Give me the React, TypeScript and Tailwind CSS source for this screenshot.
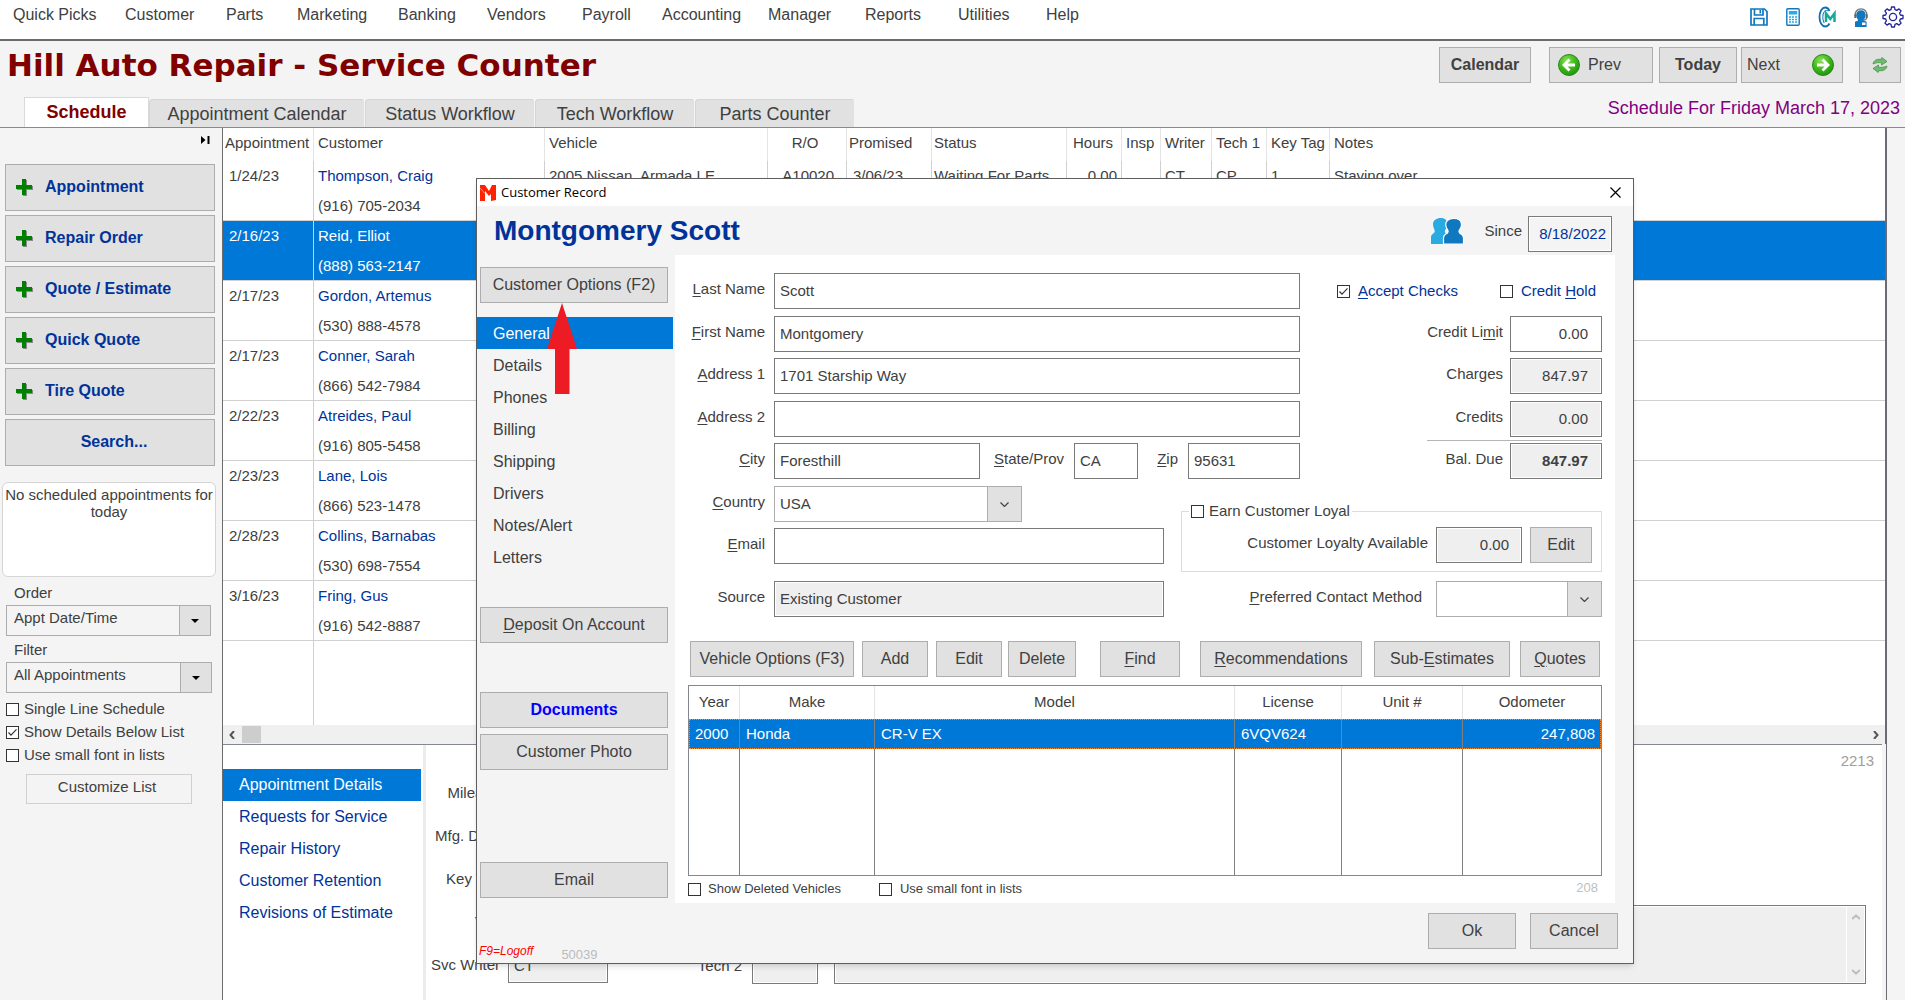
import React, { useState } from "react";
import type { ReactNode } from "react";

const MENU = [
  ["Quick Picks", "w-[112px]"],
  ["Customer", "w-[101px]"],
  ["Parts", "w-[71px]"],
  ["Marketing", "w-[101px]"],
  ["Banking", "w-[89px]"],
  ["Vendors", "w-[95px]"],
  ["Payroll", "w-20"],
  ["Accounting", "w-[106px]"],
  ["Manager", "w-[97px]"],
  ["Reports", "w-[93px]"],
  ["Utilities", "w-[88px]"],
  ["Help", "w-16"],
];

const TABS = [
  ["Appointment Calendar", "w-[216px]"],
  ["Status Workflow", "w-[170px]"],
  ["Tech Workflow", "w-40"],
  ["Parts Counter", "w-40"],
];

const COLUMNS = [
  ["Appointment", "w-[91px]", "text-left pl-0.5"],
  ["Customer", "w-[231px]", "text-left pl-1"],
  ["Vehicle", "w-[223px]", "text-left pl-1"],
  ["R/O", "w-[79px]", "text-center pr-1"],
  ["Promised", "w-[85px]", "text-left pl-0.5"],
  ["Status", "w-[135px]", "text-left pl-0.5"],
  ["Hours", "w-[55px]", "text-center pr-0.5"],
  ["Insp", "w-[39px]", "text-left pl-1"],
  ["Writer", "w-[51px]", "text-left pl-1"],
  ["Tech 1", "w-[55px]", "text-left pl-1"],
  ["Key Tag", "w-[63px]", "text-left pl-1"],
  ["Notes", "", "text-left pl-1"],
];

type Row = { date: string; name: string; phone: string; rest?: string[] };

const ROWS: Row[] = [
  {
    date: "1/24/23",
    name: "Thompson, Craig",
    phone: "(916) 705-2034",
    rest: ["2005 Nissan, Armada LE", "A10020", "3/06/23", "Waiting For Parts", "0.00", "", "CT", "CP", "1", "Staying over"],
  },
  { date: "2/16/23", name: "Reid, Elliot", phone: "(888) 563-2147" },
  { date: "2/17/23", name: "Gordon, Artemus", phone: "(530) 888-4578" },
  { date: "2/17/23", name: "Conner, Sarah", phone: "(866) 542-7984" },
  { date: "2/22/23", name: "Atreides, Paul", phone: "(916) 805-5458" },
  { date: "2/23/23", name: "Lane, Lois", phone: "(866) 523-1478" },
  { date: "2/28/23", name: "Collins, Barnabas", phone: "(530) 698-7554" },
  { date: "3/16/23", name: "Fring, Gus", phone: "(916) 542-8887" },
];

const REST_ALIGN = [
  "pl-1",
  "pr-3 text-right",
  "pl-1.5",
  "pl-0.5",
  "pr-1 text-right",
  "pl-1",
  "pl-1",
  "pl-1",
  "pl-1",
  "pl-1",
];

function Check({ className = "", defaultChecked = false, id }: { className?: string; defaultChecked?: boolean; id: string }) {
  return (
    <span className={`inline-grid size-[13px] shrink-0 ${className}`}>
      <input
        id={id}
        type="checkbox"
        defaultChecked={defaultChecked}
        className="peer col-start-1 row-start-1 size-[13px] appearance-none border border-[#333] bg-white"
      />
      <svg viewBox="0 0 13 13" className="pointer-events-none invisible col-start-1 row-start-1 size-[13px] peer-checked:visible">
        <path d="M2.5 6.5 5 9.2 10.5 3.4" fill="none" stroke="#333" strokeWidth="1.2" />
      </svg>
    </span>
  );
}

function Btn({ className = "", children }: { className?: string; children: ReactNode }) {
  return (
    <button type="button" className={`h-9 border border-[#adadad] bg-[#e1e1e1] text-base whitespace-nowrap ${className}`}>
      {children}
    </button>
  );
}

function Plus() {
  return (
    <svg viewBox="0 0 17 17" className="size-[17px]">
      <path d="M7 1h4v6h6v4h-6v6H7v-6H1V7h6z" fill="#8a8a8a" />
      <path d="M6 0h4v6h6v4h-6v6H6v-6H0V6h6z" fill="#008000" />
    </svg>
  );
}

function RoundArrow({ left = false }: { left?: boolean }) {
  return (
    <svg viewBox="0 0 22 22" className="size-[22px]">
      <defs>
        <radialGradient id={left ? "greenL" : "greenR"} cx="0.4" cy="0.3" r="0.8">
          <stop offset="0" stopColor="#8fe05a" />
          <stop offset="0.5" stopColor="#3fb91c" />
          <stop offset="1" stopColor="#178a0a" />
        </radialGradient>
      </defs>
      <circle cx="11" cy="11" r="10.5" fill={left ? "url(#greenL)" : "url(#greenR)"} stroke="#2b8a17" strokeWidth="1" />
      <path
        d={left ? "M11.5 5.5 6 11l5.5 5.5M6.5 11H17" : "M10.5 5.5 16 11l-5.5 5.5M15.5 11H5"}
        fill="none"
        stroke="#fff"
        strokeWidth="2.8"
      />
    </svg>
  );
}

function ToolbarIcons() {
  return (
    <div className="flex items-center">
      <button type="button" aria-label="Save" className="w-[36px]">
        <svg viewBox="0 0 18 18" className="size-[18px]" fill="none" stroke="#0f78bf" strokeWidth="1.7">
          <path d="M1 1h13.5L17 3.5V17H1z" />
          <path d="M4.500 1v6h8.500V1M10.300 2v3.500M4.200 17v-6.500h9.600V17" />
        </svg>
      </button>
      <button type="button" aria-label="Calculator" className="w-8">
        <svg viewBox="0 0 14 18" className="h-[18px] w-[14px]">
          <rect x="0.8" y="0.8" width="12.4" height="16.4" rx="1" fill="#fff" stroke="#0f78bf" strokeWidth="1.4" />
          <rect x="2.8" y="3" width="8.4" height="3.5" fill="#29abe2" />
          <path d="M3 9h8M3 11.500h8M3 14h8" stroke="#29abe2" strokeWidth="1.5" strokeDasharray="2 1" />
        </svg>
      </button>
      <button type="button" aria-label="Manager cloud" className="w-[35px]">
        <svg viewBox="0 0 18 22" className="h-[22px] w-[18px]" fill="none">
          <path d="M11.500 5C10.500 2.500 9 1.500 7.300 1.500 4 1.500 1.500 5.500 1.500 11s2.500 9.500 5.800 9.500c1.700 0 3.200-1 4.200-3" stroke="#0f6fb5" strokeWidth="1.8" />
          <path d="M10 5C8 3.500 6 5 5.200 8c-.7 3-.4 6.500 1 9" stroke="#0f6fb5" strokeWidth="1" />
          <path d="M8 16V7.500l4.300 5.500 4.200-5.500V16" stroke="#17a89a" strokeWidth="2.500" />
        </svg>
      </button>
      <button type="button" aria-label="Support" className="w-[29px]">
        <svg viewBox="0 0 16 19" className="h-[19px] w-[16px]">
          <path d="M8 2.200c2.800 0 4.600 2 4.600 4.700 0 2.200-.9 3.800-2 4.800.3 1 1.600 1.400 3 2V19H2v-5.300c1.500-.6 3-1 3.200-2C4 10.700 3.200 9.100 3.200 6.900c0-2.700 2-4.700 4.800-4.700z" fill="#0f78bf" />
          <path d="M2.200 8C1.600 3.500 4.500.8 8 .8s6.400 2.700 5.800 7.200M13.800 9c0 1.800-1.200 3-3.500 3" fill="none" stroke="#777" strokeWidth="1.3" />
          <path d="M1.300 6.500h2v3.500h-2zM12.700 6.500h2v3.500h-2z" fill="#666" />
          <path d="M9 14.500h3.500V17H9z" fill="#fff" />
        </svg>
      </button>
      <button type="button" aria-label="Settings" className="w-[23px]">
        <svg viewBox="0 0 22 22" className="size-[22px]" fill="none" stroke="#23239a" strokeWidth="1.3" strokeLinejoin="round">
          <path d="M9.500 1h3l.5 2.600 1.800.8L17 2.900 19.100 5l-1.500 2.200.8 1.800 2.600.5v3l-2.600.5-.8 1.800 1.500 2.200-2.100 2.100-2.200-1.500-1.800.8-.5 2.600h-3L9 18.400l-1.800-.8L5 19.100 2.900 17l1.500-2.200-.8-1.800L1 12.500v-3L3.600 9l.8-1.800L2.900 5 5 2.900l2.200 1.500L9 3.600z" />
          <circle cx="11" cy="11" r="3.6" />
        </svg>
      </button>
    </div>
  );
}

function SideSelect({ id, label, value, className }: { id: string; label: string; value: string; className: string }) {
  return (
    <div className={className}>
      <label htmlFor={id} className="block pl-2 leading-5">
        {label}
      </label>
      <div className="relative mt-0.5">
        <select id={id} className="block h-[31px] w-full appearance-none border border-[#adadad] bg-[#f4f4f4] pl-[7px] pb-1">
          <option>{value}</option>
        </select>
        <span className="pointer-events-none absolute inset-y-px right-px flex w-[31px] items-center justify-center border-l border-[#adadad] bg-[#e1e1e1]">
          <svg viewBox="0 0 8 4" className="h-1 w-2">
            <path d="M0 0h8L4 4z" fill="#000" />
          </svg>
        </span>
      </div>
    </div>
  );
}

function Sidebar() {
  const actions = ["Appointment", "Repair Order", "Quote / Estimate", "Quick Quote", "Tire Quote"];
  return (
    <aside className="w-[222px] shrink-0 text-[15px]">
      <div className="flex h-9 justify-end pt-2 pr-3">
        <button type="button" aria-label="Collapse panel" className="h-2">
          <svg viewBox="0 0 9 8" className="h-2 w-[9px]">
            <path d="M0 0l4.500 4L0 8zM6.500 0H8.500v8h-2z" fill="#000" />
          </svg>
        </button>
      </div>
      <div className="flex flex-col gap-1 pr-[7px] pl-[5px]">
        {actions.map((a) => (
          <button
            key={a}
            type="button"
            className="flex h-[47px] items-center border border-[#adadad] bg-[#e1e1e1] pl-2.5 text-base font-bold text-[#003399]"
          >
            <Plus />
            <span className="pb-0.5 pl-3">{a}</span>
          </button>
        ))}
        <button type="button" className="h-[47px] border border-[#adadad] bg-[#e1e1e1] pb-0.5 pl-2 text-base font-bold text-[#003399]">
          Search...
        </button>
      </div>
      <p className="mt-4 mr-1.5 ml-0.5 h-[95px] rounded-md border border-[#d5d5d5] bg-white pt-[3px] text-center leading-[17px]">
        No scheduled appointments for today
      </p>
      <SideSelect id="order" label="Order" value="Appt Date/Time" className="mt-1.5 mr-[11px] ml-1.5" />
      <SideSelect id="filter" label="Filter" value="All Appointments" className="mt-1 mr-2.5 ml-1.5" />
      <div className="mt-[5px] flex flex-col pl-1.5">
        {["Single Line Schedule", "Show Details Below List", "Use small font in lists"].map((t, i) => (
          <div key={t} className="flex h-[23px] items-center">
            <Check id={`side-${i}`} defaultChecked={i === 1} />
            <label htmlFor={`side-${i}`} className="pl-[5px]">
              {t}
            </label>
          </div>
        ))}
      </div>
      <button type="button" className="mt-[7px] ml-[26px] h-[30px] w-[166px] border border-[#d0d0d0] pr-1 pb-1">
        Customize List
      </button>
    </aside>
  );
}

function ScheduleTable() {
  return (
    <div className="flex min-h-0 flex-1 flex-col border-r-2 border-[#6b6b73]">
      <table className="h-full w-full flex-1 table-fixed border-separate border-spacing-0 text-[15px]">
        <thead>
          <tr>
            {COLUMNS.map(([name, width, align], i) => (
              <th
                key={name}
                className={`h-[33px] py-0 pb-0.5 font-normal whitespace-nowrap ${width} ${align} ${i < 11 ? "border-r border-[#e5e5e5]" : ""}`}
              >
                {name}
              </th>
            ))}
          </tr>
        </thead>
        <tbody>
          {ROWS.map((r, ri) => {
            const sel = ri === 1;
            return (
              <tr key={r.phone} className={sel ? "bg-[#0078d7] text-white" : ""}>
                <td className="h-[60px] border-r border-b border-[#d0d0d0] pl-1.5 align-top leading-[29px]">{r.date}</td>
                <td className="h-[60px] border-r border-b border-[#d0d0d0] pl-1 align-top leading-[29px] whitespace-nowrap">
                  <span className={`block ${sel ? "" : "text-[#003399]"}`}>{r.name}</span>
                  <span className="block pt-px">{r.phone}</span>
                </td>
                {REST_ALIGN.map((align, i) => (
                  <td
                    key={i}
                    className={`h-[60px] overflow-hidden border-b border-[#d0d0d0] align-top leading-[29px] whitespace-nowrap ${align} ${i < 9 ? "border-r" : ""}`}
                  >
                    {r.rest ? r.rest[i] : ""}
                  </td>
                ))}
              </tr>
            );
          })}
          <tr>
            {COLUMNS.map(([name], i) => (
              <td key={name} className={i < 11 ? "border-r border-[#d0d0d0]" : ""} />
            ))}
          </tr>
        </tbody>
      </table>
      <div className="flex h-5 shrink-0 items-center justify-between border-b border-[#828790] bg-[#f0f0f0] px-1.5">
        <div className="flex items-center gap-[7px]">
          <svg viewBox="0 0 6 8" className="h-2 w-1.5" fill="none" stroke="#555" strokeWidth="2">
            <path d="M5 0 1.500 4 5 8" />
          </svg>
          <span className="h-[17px] w-[19px] bg-[#cdcdcd]" />
        </div>
        <svg viewBox="0 0 6 8" className="h-2 w-1.5" fill="none" stroke="#555" strokeWidth="2">
          <path d="M1 0 4.500 4 1 8" />
        </svg>
      </div>
    </div>
  );
}

function DetailsPanel() {
  const items = ["Appointment Details", "Requests for Service", "Repair History", "Customer Retention", "Revisions of Estimate"];
  const ro = "h-9 border border-[#7a7a7a] bg-[#efefef] shadow-[inset_0_0_0_1px_white] pl-[5px] text-[15px]";
  return (
    <div className="flex h-[255px] shrink-0 border-r border-[#6b6b73]">
      <nav className="w-[198px] shrink-0 pt-6">
        {items.map((t, i) => (
          <a
            key={t}
            href="#"
            className={`block h-8 pl-4 text-base leading-8 ${i === 0 ? "bg-[#0078d7] text-white" : "text-[#003399]"}`}
          >
            {t}
          </a>
        ))}
      </nav>
      <div className="ml-0.5 flex flex-1 border-l-[3px] border-[#ececec] pt-2 text-[15px]">
        <div className="grid w-[182px] shrink-0 grid-cols-[74px_1fr] content-start gap-x-2 gap-y-[7px] pt-[22px]">
          {[
            ["Mileage", ""],
            ["Mfg. Date", ""],
            ["Key Tag", ""],
            ["VIN", ""],
            ["Svc Writer", "CT"],
          ].map(([l, v]) => (
            <React.Fragment key={l}>
              <label htmlFor={`d-${l}`} className="text-right leading-9 whitespace-nowrap">
                {l}
              </label>
              <input id={`d-${l}`} readOnly defaultValue={v} className={`w-full ${ro}`} />
            </React.Fragment>
          ))}
        </div>
        <div className="flex flex-1 flex-col justify-between pr-4 pb-4">
          <p className="-mr-2 text-right leading-4 text-[#a0a0a0]">2213</p>
          <div className="flex items-end">
            <label htmlFor="tech2" className="w-36 pr-2.5 text-right leading-9">
              Tech 2
            </label>
            <input id="tech2" readOnly className={`w-[66px] ${ro}`} />
            <div className="ml-4 flex h-[79px] flex-1 border border-[#7a7a7a] bg-[#efefef] shadow-[inset_0_0_0_1px_white]">
              <textarea aria-label="Notes" readOnly className="flex-1 resize-none bg-transparent" />
              <div className="flex w-[19px] flex-col items-center justify-between border-l border-white py-2">
                <svg viewBox="0 0 8 6" className="h-1.5 w-2" fill="none" stroke="#bbb" strokeWidth="2">
                  <path d="M0 5 4 1.500 8 5" />
                </svg>
                <svg viewBox="0 0 8 6" className="h-1.5 w-2" fill="none" stroke="#bbb" strokeWidth="2">
                  <path d="M0 1 4 4.500 8 1" />
                </svg>
              </div>
            </div>
          </div>
        </div>
      </div>
      <span className="-mt-px w-1 bg-[#f4f4f4]" />
    </div>
  );
}

const FIELD = "h-9 w-full border border-[#7a7a7a] bg-white pb-0.5 pl-[5px] text-[15px]";
const READONLY = "h-9 w-full border border-[#7a7a7a] bg-[#efefef] shadow-[inset_0_0_0_1px_white] pb-0.5 pl-[5px] text-[15px]";

function Label({ id, k, rest, className = "" }: { id: string; k: string; rest: string; className?: string }) {
  return (
    <label htmlFor={id} className={`text-right whitespace-nowrap ${className}`}>
      <u className="underline-offset-2">{k}</u>
      {rest}
    </label>
  );
}

function ComboBox({ id, value, className }: { id: string; value: string; className: string }) {
  return (
    <div className={`relative self-start ${className}`}>
      <select id={id} className="block h-9 w-full appearance-none border border-[#adadad] bg-white pl-[5px] text-[15px]">
        <option>{value}</option>
      </select>
      <span className="pointer-events-none absolute inset-y-0 right-0 flex w-[35px] items-center justify-center border border-[#adadad] bg-[#e1e1e1]">
        <svg viewBox="0 0 9 5" className="h-[5px] w-[9px]" fill="none" stroke="#444" strokeWidth="1.2">
          <path d="M.5.5l4 4 4-4" />
        </svg>
      </span>
    </div>
  );
}

function CustomerForm() {
  return (
    <div className="grid w-[612px] grid-cols-[77px_1fr] grid-rows-[43px_42px_43px_42px_43px_42px_53px_36px] gap-x-[9px] [&>label]:leading-8">
      <Label id="last" k="L" rest="ast Name" />
      <input id="last" defaultValue="Scott" className={FIELD} />
      <Label id="first" k="F" rest="irst Name" />
      <input id="first" defaultValue="Montgomery" className={FIELD} />
      <Label id="addr1" k="A" rest="ddress 1" />
      <input id="addr1" defaultValue="1701 Starship Way" className={FIELD} />
      <Label id="addr2" k="A" rest="ddress 2" />
      <input id="addr2" className={FIELD} />
      <Label id="city" k="C" rest="ity" />
      <div className="grid grid-cols-[206px_94px_64px_50px_112px] leading-8">
        <input id="city" defaultValue="Foresthill" className={FIELD} />
        <Label id="state" k="S" rest="tate/Prov" className="pr-2.5" />
        <input id="state" defaultValue="CA" className={FIELD} />
        <Label id="zip" k="Z" rest="ip" className="pr-2.5" />
        <input id="zip" defaultValue="95631" className={FIELD} />
      </div>
      <Label id="country" k="C" rest="ountry" />
      <ComboBox id="country" value="USA" className="w-[248px]" />
      <Label id="email" k="E" rest="mail" />
      <div className="w-[390px]">
        <input id="email" className={FIELD} />
      </div>
      <label htmlFor="source" className="text-right">
        Source
      </label>
      <div className="w-[390px]">
        <input id="source" readOnly defaultValue="Existing Customer" className={READONLY} />
      </div>
    </div>
  );
}

function Money({ id, label, value, bold = false, editable = false }: { id: string; label: ReactNode; value: string; bold?: boolean; editable?: boolean }) {
  return (
    <div className="flex items-center justify-end">
      <label htmlFor={id} className="pr-[7px] pb-1">
        {label}
      </label>
      <div className="w-[92px]">
        <input
          id={id}
          readOnly={!editable}
          defaultValue={value}
          className={`text-right ${editable ? FIELD : READONLY} pr-[13px] ${bold ? "font-bold" : ""}`}
        />
      </div>
    </div>
  );
}

function BalancePanel() {
  return (
    <div className="flex w-[421px] flex-col">
      <div className="flex h-[43px] items-center justify-end pr-1.5 pb-[7px] text-[#003399]">
        <Check id="accept" defaultChecked />
        <label htmlFor="accept" className="pl-2">
          <u className="underline-offset-2">A</u>ccept Checks
        </label>
        <Check id="hold" className="ml-[42px]" />
        <label htmlFor="hold" className="pl-2">
          Credit <u className="underline-offset-2">H</u>old
        </label>
      </div>
      <Money id="limit" label={<>Credit Li<u className="underline-offset-2">m</u>it</>} value="0.00" editable />
      <div className="mt-1.5">
        <Money id="charges" label="Charges" value="847.97" />
      </div>
      <div className="mt-[7px]">
        <Money id="credits" label="Credits" value="0.00" />
      </div>
      <hr className="mt-[3px] mb-0.5 w-[175px] self-end border-[#b5b5b5]" />
      <Money id="due" label="Bal. Due" value="847.97" bold />
      <fieldset className="mt-6 h-[69px] border border-[#dcdcdc]">
        <legend className="ml-[7px] flex h-4 items-center px-0.5">
          <Check id="loyal" />
          <label htmlFor="loyal" className="pl-[5px]">
            Earn Customer Loyal
          </label>
        </legend>
        <div className="flex items-center justify-end pt-2 pr-[9px]">
          <label htmlFor="avail" className="pr-2 pb-1">
            Customer Loyalty Available
          </label>
          <div className="w-[86px]">
            <input id="avail" readOnly defaultValue="0.00" className={`text-right ${READONLY} pr-3`} />
          </div>
          <Btn className="ml-2 w-[62px]">Edit</Btn>
        </div>
      </fieldset>
      <div className="mt-[9px] flex items-center justify-end">
        <label htmlFor="contact" className="pr-3.5 pb-1">
          <u className="underline-offset-2">P</u>referred Contact Method
        </label>
        <ComboBox id="contact" value="" className="w-[166px]" />
      </div>
    </div>
  );
}

function VehicleTable() {
  const cols = [
    ["Year", "w-[51px]", "2000"],
    ["Make", "w-[135px]", "Honda"],
    ["Model", "", "CR-V EX"],
    ["License", "w-[107px]", "6VQV624"],
    ["Unit #", "w-[121px]", ""],
    ["Odometer", "w-[138px]", "247,808"],
  ];
  return (
    <table className="mt-2 h-[191px] w-full table-fixed border-separate border-spacing-0 border border-[#828790] text-[15px]">
      <thead>
        <tr>
          {cols.map(([n, w], i) => (
            <th key={n} className={`h-[33px] p-0 text-center font-normal ${w} ${i < 5 ? "border-r border-[#e5e5e5]" : ""}`}>
              {n}
            </th>
          ))}
        </tr>
      </thead>
      <tbody>
        <tr className="bg-[#0078d7] text-white outline-1 -outline-offset-1 outline-dotted outline-[#ff8728]">
          {cols.map(([n, , v], i) => (
            <td
              key={n}
              className={`h-[30px] py-0 whitespace-nowrap ${i < 5 ? "border-r border-[#808080]" : "pr-1.5 text-right"} ${i === 0 ? "pl-1.5" : "pl-1.5"}`}
            >
              {v}
            </td>
          ))}
        </tr>
        <tr>
          {cols.map(([n], i) => (
            <td key={n} className={i < 5 ? "border-r border-[#808080]" : ""} />
          ))}
        </tr>
      </tbody>
    </table>
  );
}

function CustomerDialog({ onClose }: { onClose: () => void }) {
  const nav = ["General", "Details", "Phones", "Billing", "Shipping", "Drivers", "Notes/Alert", "Letters"];
  return (
    <section
      role="dialog"
      aria-labelledby="dialog-title"
      className="absolute top-[178px] left-[476px] w-[1158px] border border-[#5e5e5e] bg-[#f4f4f4] text-[15px] shadow-md"
    >
      <div className="flex h-[27px] items-center bg-white pr-2 pl-[3px]">
        <svg viewBox="0 0 16 16" className="size-4">
          <path d="M0 0h5l4 6 3-6h4v15l-5 1V9l-2 2-4-5v10H0z" fill="#ff2200" />
          <path d="M.5 3.500 8 12" stroke="#fff" strokeWidth=".8" strokeDasharray="1.5 1" />
        </svg>
        <h2 id="dialog-title" className="flex-1 pl-[5px] font-['Open_Sans',sans-serif] text-[13px] text-black">
          Customer Record
        </h2>
        <button type="button" aria-label="Close" onClick={onClose} className="p-1">
          <svg viewBox="0 0 11 11" className="size-[11px]" stroke="#000" strokeWidth="1.2">
            <path d="M.5.5l10 10M10.500.5l-10 10" />
          </svg>
        </button>
      </div>

      <div className="flex h-[49px] items-center pt-1.5 pr-[21px] pl-[17px]">
        <h1 className="flex-1 pb-1.5 text-[28px] leading-10 font-bold text-[#003399]">Montgomery Scott</h1>
        <svg viewBox="0 0 33 26" className="mb-1.5 h-[26px] w-[33px]">
          <path d="M10 0c4 0 6.500 2.600 6.500 6 0 2-.8 4-2 5.500-1 1.300-.8 3.500 1 4.500 1.500.9 2 2 2 4v6H0v-6c0-2.300.7-3.400 2-4.300 2-1 2.200-3 1.200-4.400C2.600 9.800 2 8 2 6c0-3.500 3.500-6 8-6z" fill="#29abe2" />
          <path
            d="M22.500 0.500c5 0 8 2.600 8 6 0 2-.8 3.700-1.800 5-1 1.300-.9 3.300.8 4.300 2 1 3 2 3 4.200v6H12.500v-6c0-2.200 1-3.200 2.800-4.200 2-1 2.200-3 1.200-4.300-1-1.300-1.800-3-1.800-5 0-3.500 2.800-6 7.800-6z"
            fill="#0f78bf"
            stroke="#fff"
            strokeWidth="1.2"
          />
        </svg>
        <label htmlFor="since" className="pr-1.5 pb-1 pl-5">
          Since
        </label>
        <input
          id="since"
          defaultValue="8/18/2022"
          className="h-9 w-[84px] border border-[#7a7a7a] bg-[#f4f4f4] pr-[5px] text-right text-[15px] text-[#003399] shadow-[inset_0_0_0_1px_white]"
        />
      </div>

      <div className="flex">
        <div className="relative flex w-[198px] shrink-0 flex-col text-base">
          <Btn className="mr-[7px] ml-[3px] mt-3">Customer Options (F2)</Btn>
          <nav className="mt-3.5 mr-0.5">
            {nav.map((n, i) => (
              <a key={n} href="#" className={`block h-8 pl-4 leading-[33px] ${i === 0 ? "bg-[#0078d7] text-white" : ""}`}>
                {n}
              </a>
            ))}
          </nav>
          <Btn className="mr-[7px] ml-[3px] mt-[34px]">
            <u className="underline-offset-2">D</u>eposit On Account
          </Btn>
          <Btn className="mr-[7px] ml-[3px] mt-[49px] font-bold text-[#0000ff]">Documents</Btn>
          <Btn className="mr-[7px] ml-[3px] mt-1.5">Customer Photo</Btn>
          <Btn className="mr-[7px] ml-[3px] mt-[92px]">Email</Btn>
          <div className="mt-auto flex h-6 gap-7 pl-0.5 text-[13px]">
            <span className="text-[12px] leading-6 text-[#ff0000] italic">F9=Logoff</span>
            <span className="leading-8 text-[#bbb]">50039</span>
          </div>
          <svg viewBox="0 0 30 91" className="absolute top-12 left-[70px] h-[91px] w-[30px]">
            <path d="M15 0 30 46H22.500V91H8V46H0z" fill="#ed1c24" />
          </svg>
        </div>

        <div className="flex-1">
          <div className="mr-[18px] h-[648px] bg-white px-[13px] pt-[18px]">
            <div className="flex justify-between">
              <CustomerForm />
              <div className="-ml-[119px]">
                <BalancePanel />
              </div>
            </div>
            <div className="mt-6 ml-0.5 flex">
              <Btn className="w-[164px]">Vehicle Options (F3)</Btn>
              <Btn className="ml-2 w-[66px]">Add</Btn>
              <Btn className="ml-2 w-[66px]">Edit</Btn>
              <Btn className="ml-1.5 w-[68px]">Delete</Btn>
              <Btn className="ml-6 w-20">
                <u className="underline-offset-2">F</u>ind
              </Btn>
              <Btn className="ml-5 w-[162px]">
                <u className="underline-offset-2">R</u>ecommendations
              </Btn>
              <Btn className="ml-3 w-[136px]">
                Sub-<u className="underline-offset-2">E</u>stimates
              </Btn>
              <Btn className="ml-2.5 w-20">
                <u className="underline-offset-2">Q</u>uotes
              </Btn>
            </div>
            <VehicleTable />
            <div className="mt-1 flex items-center text-[13px] leading-4">
              <Check id="deleted" />
              <label htmlFor="deleted" className="pl-[7px]">
                Show Deleted Vehicles
              </label>
              <Check id="small" className="ml-[38px]" />
              <label htmlFor="small" className="pl-2">
                Use small font in lists
              </label>
              <span className="ml-auto pr-1 pb-0.5 text-[#c0c0c0]">208</span>
            </div>
          </div>
          <div className="flex h-[60px] justify-end gap-3.5 pt-2.5 pr-[15px]">
            <Btn className="w-[88px]">Ok</Btn>
            <Btn className="w-[88px]">Cancel</Btn>
          </div>
        </div>
      </div>
    </section>
  );
}

export default function App() {
  const [open, setOpen] = useState(true);
  return (
    <div className="relative flex h-screen w-full flex-col overflow-hidden bg-[#f4f4f4] font-['Liberation_Sans',Arial,sans-serif] text-[#404040]">
      <div className="flex h-[41px] items-start justify-between border-b-2 border-[#6b6b6b] bg-white">
        <nav className="flex pl-[13px] text-base leading-[30px]">
          {MENU.map(([m, w]) => (
            <a key={m} href="#" className={w}>
              {m}
            </a>
          ))}
        </nav>
        <div className="pt-1.5">
          <ToolbarIcons />
        </div>
      </div>

      <header className="flex h-[87px] shrink-0 justify-between border-b border-[#8a8a8a]">
        <div className="flex flex-col">
          <h1 className="h-12 pl-[7px] font-['DejaVu_Sans',sans-serif] text-[31px] leading-[48px] font-bold whitespace-nowrap text-[#800000]">
            Hill Auto Repair - Service Counter
          </h1>
          <div role="tablist" className="mt-auto flex items-end pl-6 text-lg">
            <button type="button" role="tab" aria-selected="true" className="h-[30px] w-[125px] border border-b-0 border-[#d9d9d9] bg-white pb-0.5 font-bold text-[#800000]">
              Schedule
            </button>
            {TABS.map(([t, w]) => (
              <button
                key={t}
                type="button"
                role="tab"
                aria-selected="false"
                className={`h-7 rounded-t-sm border border-b-0 border-[#d5d5d5] border-r-[#f4f4f4] bg-[#e1e1e1] whitespace-nowrap ${w}`}
              >
                {t}
              </button>
            ))}
          </div>
        </div>
        <div className="flex flex-col items-end pt-1.5">
          <div className="flex pr-1">
            <Btn className="w-[92px] font-bold">Calendar</Btn>
            <Btn className="ml-[18px] flex w-[104px] items-center pl-2">
              <RoundArrow left />
              <span className="pl-2">Prev</span>
            </Btn>
            <Btn className="ml-1.5 w-[78px] font-bold">Today</Btn>
            <Btn className="ml-1 flex w-[102px] items-center justify-between pr-2 pl-[5px]">
              Next
              <RoundArrow />
            </Btn>
            <Btn className="ml-4 flex w-[42px] items-center justify-center">
              <svg viewBox="0 0 16 16" className="size-4" aria-label="Refresh">
                <path d="M1 7c.5-3.500 4-5.500 8-4.500L9.800.5 15 4.500 9.500 8l.3-2C7 5.300 4.500 5.500 1 7z" fill="#6dbb6d" stroke="#3c8d3c" strokeWidth=".7" />
                <path d="M15 9c-.5 3.500-4 5.500-8 4.500l-.8 2L1 11.500 6.500 8l-.3 2c2.800.7 5.300.5 8.800-1z" fill="#6dbb6d" stroke="#3c8d3c" strokeWidth=".7" />
              </svg>
            </Btn>
          </div>
          <p className="pt-[11px] pr-[5px] text-lg text-[#800080]">Schedule For Friday March 17, 2023</p>
        </div>
      </header>

      <div className="flex min-h-0 flex-1">
        <Sidebar />
        <main className="mr-[18px] flex min-w-0 flex-1 flex-col border-l border-[#6b6b6b] bg-white">
          <ScheduleTable />
          <DetailsPanel />
        </main>
      </div>

      {open && <CustomerDialog onClose={() => setOpen(false)} />}
    </div>
  );
}
